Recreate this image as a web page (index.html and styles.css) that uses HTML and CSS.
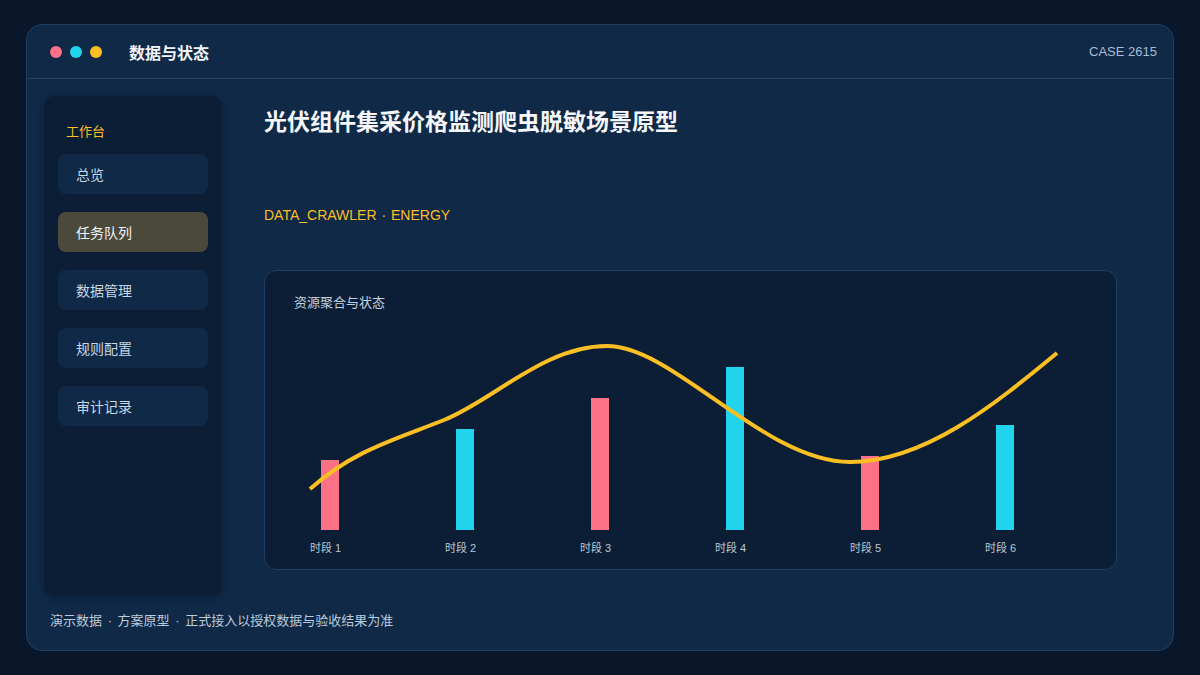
FILE: index.html
```html
<!DOCTYPE html>
<html lang="zh-CN">
<head>
    <meta charset="UTF-8">
    <meta name="viewport" content="width=device-width, initial-scale=1.0">
    <title>数据与状态</title>
    <link rel="stylesheet" href="styles.css">
</head>
<body>

    <div class="window">
        <!-- Title bar -->
        <div class="titlebar">
            <div class="dots">
                <span class="dot pink"></span>
                <span class="dot cyan"></span>
                <span class="dot yellow"></span>
            </div>
            <div class="app-title">数据与状态</div>
            <div class="case-no">CASE 2615</div>
        </div>

        <div class="body">
            <!-- Sidebar navigation -->
            <aside class="sidebar">
                <div class="side-label">工作台</div>
                <div class="nav-item">总览</div>
                <div class="nav-item active">任务队列</div>
                <div class="nav-item">数据管理</div>
                <div class="nav-item">规则配置</div>
                <div class="nav-item">审计记录</div>
            </aside>

            <main class="main">
                <h1 class="page-title">光伏组件集采价格监测爬虫脱敏场景原型</h1>
                <div class="tag-line">DATA_CRAWLER<span class="sep"> · </span>ENERGY</div>

                <section class="chart-card">
                    <div class="chart-title">资源聚合与状态</div>
                    <svg class="chart" width="792" height="240" viewBox="0 0 792 240">
                        <rect x="27" y="140" width="18" height="70" fill="#fb7185"/>
                        <rect x="162" y="109" width="18" height="101" fill="#22d3ee"/>
                        <rect x="297" y="78" width="18" height="132" fill="#fb7185"/>
                        <rect x="432" y="47" width="18" height="163" fill="#22d3ee"/>
                        <rect x="567" y="136" width="18" height="74" fill="#fb7185"/>
                        <rect x="702" y="105" width="18" height="105" fill="#22d3ee"/>

                        <path d="M16 169 C60 130 100 120 150 100 C200 80 250 26 313 26 C380 26 470 142 556 142 C630 142 700 85 763 33"
                              fill="none" stroke="#fbbf24" stroke-width="4"/>

                        <g class="axis-label">
                            <text x="16" y="232">时段 1</text>
                            <text x="151" y="232">时段 2</text>
                            <text x="286" y="232">时段 3</text>
                            <text x="421" y="232">时段 4</text>
                            <text x="556" y="232">时段 5</text>
                            <text x="691" y="232">时段 6</text>
                        </g>
                    </svg>
                </section>
            </main>
        </div>

        <div class="footer">演示数据<span class="sep"> · </span>方案原型<span class="sep"> · </span>正式接入以授权数据与验收结果为准</div>
    </div>

</body>
</html>
```

FILE: styles.css
```css
/* Page */
body {
    margin: 0;
    height: 675px;
    background-color: #0a172b;
    font-family: "Liberation Sans", "Noto Sans CJK SC", sans-serif;
    color: #fff;
    padding: 24px 26px 24px 26px;
    box-sizing: border-box;
}

.window {
    height: 627px;
    background-color: #0f2947;
    border: 1px solid #1f3f62;
    border-radius: 16px;
    box-sizing: border-box;
    display: flex;
    flex-direction: column;
    overflow: hidden;
}

/* Title bar */
.titlebar {
    height: 54px;
    flex-shrink: 0;
    display: flex;
    align-items: center;
    padding: 0 16px 0 23px;
    border-bottom: 1px solid #1f4366;
    box-sizing: border-box;
}

.dots {
    display: flex;
    gap: 8px;
}

.dot {
    width: 12px;
    height: 12px;
    border-radius: 50%;
}

.pink { background-color: #fb7185; }
.cyan { background-color: #22d3ee; }
.yellow { background-color: #fbbf24; }

.app-title {
    margin-left: 27px;
    font-size: 16px;
    font-weight: bold;
    color: #f1f5f9;
}

.case-no {
    margin-left: auto;
    font-size: 13px;
    color: #a9bdd3;
}

/* Body: sidebar + main */
.body {
    flex: 1;
    display: grid;
    grid-template-columns: 178px 1fr;
    gap: 42px;
    padding: 17px 56px 0 17px;
    min-height: 0;
}

.sidebar {
    height: 500px;
    background-color: #0b1e36;
    border-radius: 10px;
    padding: 26px 14px 0 14px;
    box-sizing: border-box;
    box-shadow: 0 2px 8px rgba(0, 0, 0, 0.2);
}

.side-label {
    font-size: 13px;
    color: #fbbf24;
    padding-left: 8px;
    line-height: 20px;
    margin-bottom: 12px;
}

.nav-item {
    height: 40px;
    line-height: 42px;
    padding-left: 18px;
    margin-bottom: 18px;
    border-radius: 8px;
    background-color: #0f2947;
    font-size: 14px;
    color: #c9d6e4;
}

.nav-item.active {
    background-color: #4b4a3a;
    color: #eef2f6;
}

/* Main */
.main {
    min-width: 0;
}

.page-title {
    margin: 11px 0 0 0;
    font-size: 23px;
    line-height: 30px;
    font-weight: bold;
    color: #f5f7fa;
}

.tag-line {
    margin-top: 68px;
    font-size: 14px;
    line-height: 20px;
    color: #fbbf24;
}

.sep {
    white-space: pre;
    padding: 0 1px;
}

.footer .sep {
    padding: 0 2px;
}

.chart-card {
    margin-top: 45px;
    height: 300px;
    background-color: #0b1e36;
    border: 1px solid #1f3f62;
    border-radius: 12px;
    padding: 23px 0 0 29px;
    box-sizing: border-box;
}

.chart-title {
    font-size: 13px;
    line-height: 18px;
    color: #c3d0de;
}

.chart {
    display: block;
    margin-top: 8px;
    overflow: visible;
}

.axis-label text {
    font-size: 11px;
    fill: #b9c7d6;
    font-family: "Liberation Sans", "Noto Sans CJK SC", sans-serif;
}

/* Footer */
.footer {
    padding: 0 0 0 23px;
    height: 54px;
    line-height: 50px;
    font-size: 13px;
    color: #bccadb;
    margin-top: auto;
}
```
